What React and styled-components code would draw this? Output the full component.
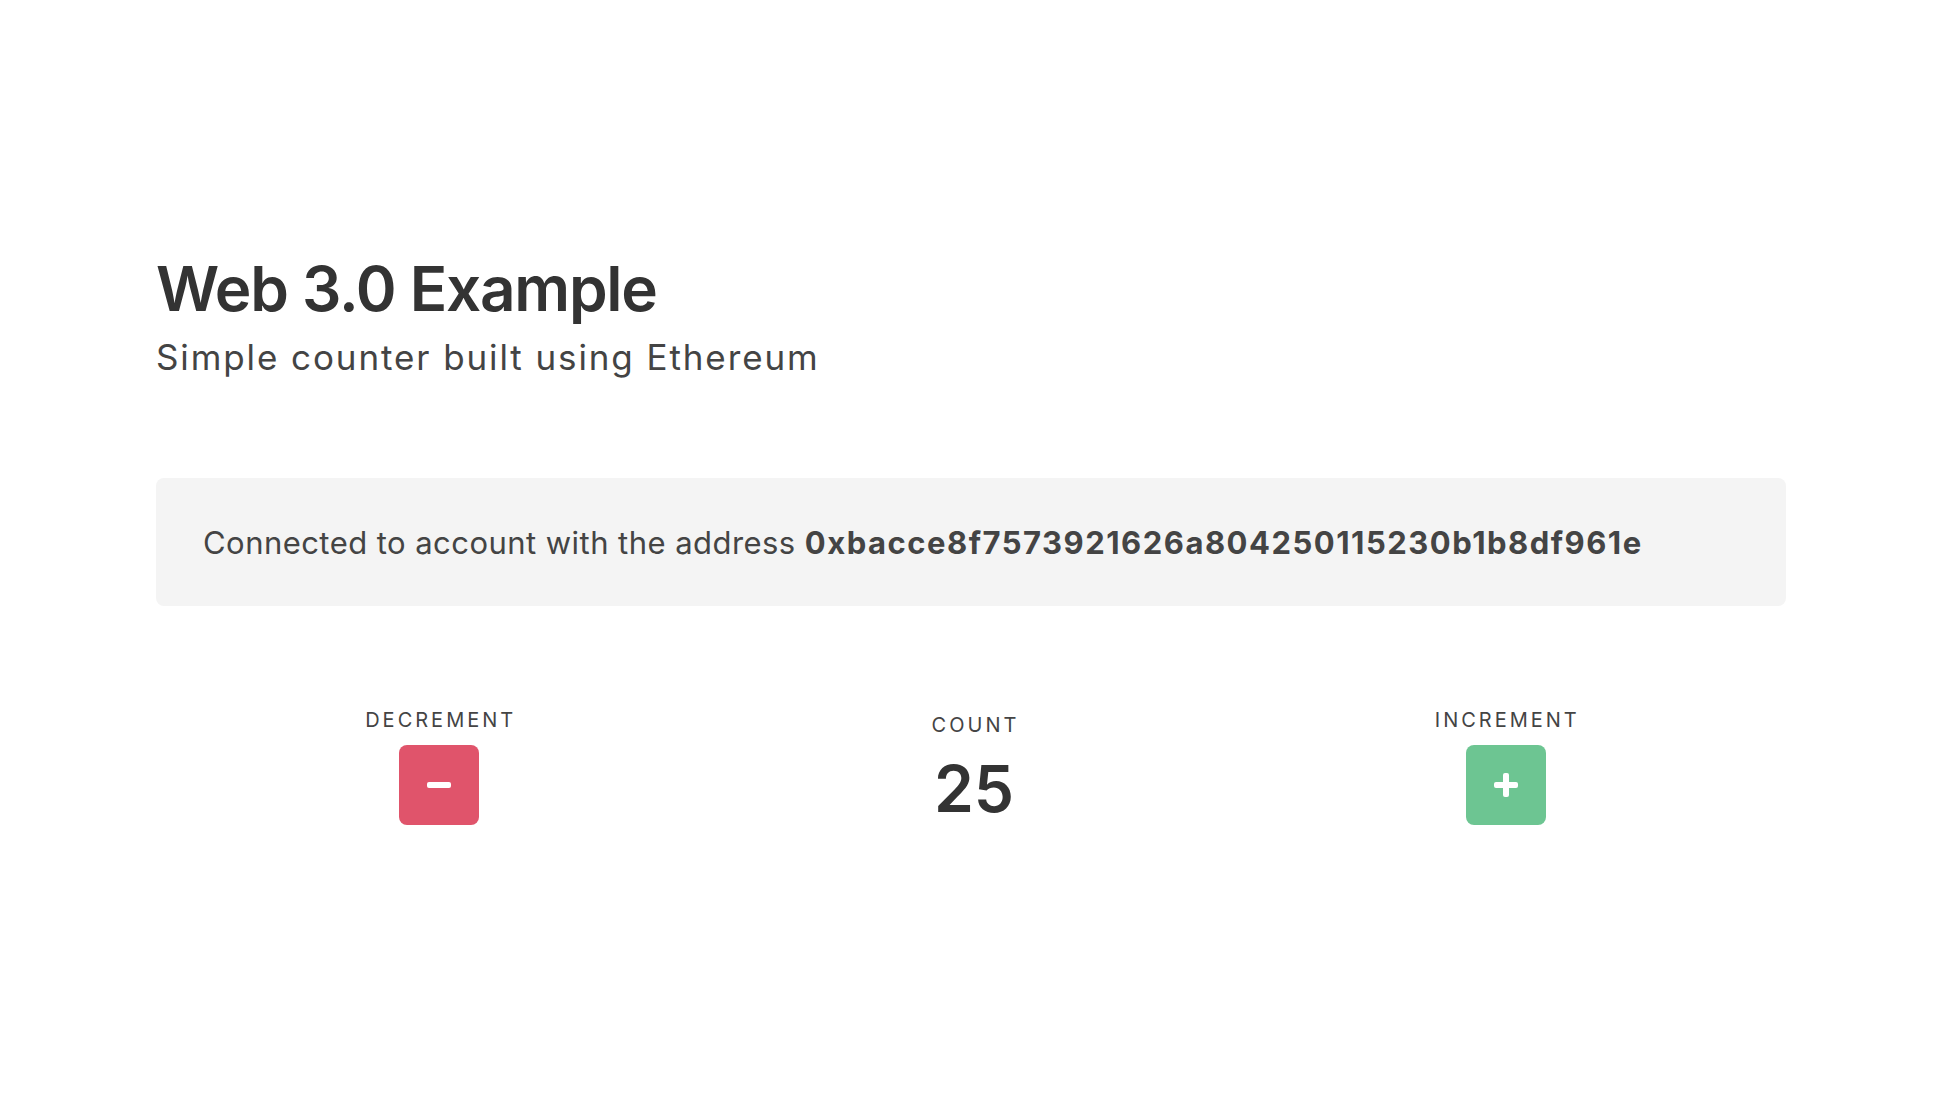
import React from "react";
import styled, { createGlobalStyle } from "styled-components";

const Global = createGlobalStyle`
  html, body { margin: 0; padding: 0; background: #fff; }
  body { font-family: Inter, "Noto Sans", sans-serif; color: #333; -webkit-font-smoothing: antialiased; }
`;

const Page = styled.main`
  width: 1630px;
  margin: 0 164px 0 156px;
  padding-top: 253px;
`;

const Title = styled.h1`
  margin: 0;
  font-size: 62px;
  line-height: 72px;
  font-weight: 600;
  letter-spacing: -1.25px;
  color: #333;
`;

const Subtitle = styled.p`
  margin: 12px 0 0;
  font-size: 35px;
  line-height: 40px;
  font-weight: 400;
  letter-spacing: 1.9px;
  color: #444;
`;

const AccountBox = styled.section`
  margin-top: 101px;
  background: #f4f4f4;
  border-radius: 8px;
  padding: 47px 47px 45px;
  font-size: 31px;
  line-height: 36px;
  letter-spacing: 0.45px;
  color: #444;
`;

const Address = styled.strong`
  font-weight: 700;
  letter-spacing: 1.5px;
  color: #444;
`;

const Controls = styled.div`
  margin-top: 102px;
  display: flex;
  justify-content: space-around;
  align-items: center;
`;

const Column = styled.div`
  display: flex;
  flex-direction: column;
  align-items: center;
`;

const Label = styled.div`
  font-size: 20px;
  line-height: 24px;
  letter-spacing: 0.15em;
  margin-right: -0.15em;
  text-transform: uppercase;
  color: #444;
`;

const ActionButton = styled.button`
  margin-top: 13px;
  width: 80px;
  height: 80px;
  border: none;
  border-radius: 8px;
  background: ${(p) => p.$color};
  display: flex;
  align-items: center;
  justify-content: center;
  cursor: pointer;
  padding: 0;
`;

const Count = styled.div`
  margin-top: 20px;
  font-size: 64px;
  line-height: 64px;
  font-weight: 600;
  color: #333;
`;

const Minus = () => (
  <svg width="26" height="26" viewBox="0 0 26 26">
    <rect x="1" y="10" width="24" height="6" rx="2" fill="#fff" />
  </svg>
);

const Plus = () => (
  <svg width="26" height="26" viewBox="0 0 26 26">
    <rect x="1" y="10" width="24" height="6" rx="2" fill="#fff" />
    <rect x="10" y="1" width="6" height="24" rx="2" fill="#fff" />
  </svg>
);

export default function App() {
  return (
    <>
      <Global />
      <Page>
        <Title>Web 3.0 Example</Title>
        <Subtitle>Simple counter built using Ethereum</Subtitle>
        <AccountBox>
          Connected to account with the address{" "}
          <Address>0xbacce8f7573921626a804250115230b1b8df961e</Address>
        </AccountBox>
        <Controls>
          <Column>
            <Label>Decrement</Label>
            <ActionButton $color="#e0546b" aria-label="Decrement">
              <Minus />
            </ActionButton>
          </Column>
          <Column>
            <Label>Count</Label>
            <Count>25</Count>
          </Column>
          <Column>
            <Label>Increment</Label>
            <ActionButton $color="#6dc592" aria-label="Increment">
              <Plus />
            </ActionButton>
          </Column>
        </Controls>
      </Page>
    </>
  );
}
